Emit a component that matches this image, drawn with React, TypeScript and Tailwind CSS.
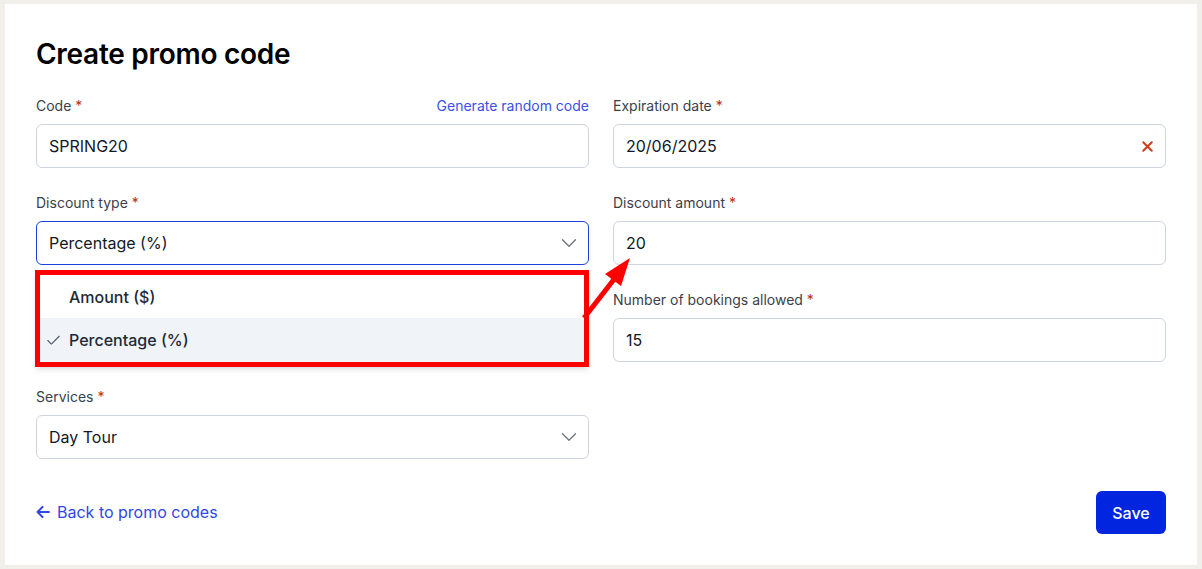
import React from "react";
import { Check, ChevronDown, X } from "lucide-react";

const Label = ({ text, required = true }: { text: string; required?: boolean }) => (
  <span className="text-sm leading-5 text-[#3b3f4a]">
    {text}
    {required && <span className="text-[#b8330f]"> *</span>}
  </span>
);

const inputCls =
  "mt-2 flex h-[44px] items-center rounded-md border border-[#cdd5e0] bg-white pl-3 pr-3.5 text-base text-[#111827]";

const Field = ({ label, value }: { label: string; value: string }) => (
  <div className="flex flex-col">
    <Label text={label} />
    <div className={inputCls}>{value}</div>
  </div>
);

export default function App() {
  return (
    <div
      className="min-h-screen bg-[#f0efea] pl-[5px] pr-[5px] pt-1"
      style={{ fontFamily: "Inter, 'Noto Sans', sans-serif" }}
    >
      <div className="relative bg-white px-[31px] pt-[32px] pb-[31px]">
        <h1 className="text-[28px] font-semibold leading-9 tracking-[-0.01em] text-black">Create promo code</h1>

        <div className="mt-[24px] grid grid-cols-2 gap-x-6 gap-y-[25px]">
          {/* Code */}
          <div className="flex flex-col">
            <div className="flex items-center justify-between">
              <Label text="Code" />
              <span className="text-sm leading-5 text-[#3d50e6]">Generate random code</span>
            </div>
            <div className={inputCls}>SPRING20</div>
          </div>

          {/* Expiration date */}
          <div className="flex flex-col">
            <Label text="Expiration date" />
            <div className={`${inputCls} justify-between !pr-[9px]`}>
              <span>20/06/2025</span>
              <X size={17} strokeWidth={2.8} className="text-[#d23a17]" />
            </div>
          </div>

          {/* Discount type + open dropdown */}
          <div className="relative flex flex-col">
            <Label text="Discount type" />
            <div className="mt-2 flex h-[44px] items-center justify-between rounded-md border border-[#1f3fe0] bg-white pl-3 pr-1.5 text-base text-[#111827]">
              <span>Percentage (%)</span>
              <ChevronDown size={26} strokeWidth={1.2} className="text-[#6b7280]" />
            </div>
            <div className="absolute left-[-1px] right-0 top-[77px] z-10 border-[5px] border-[#ff0000] bg-white shadow-md">
              <div className="flex h-[43px] items-center pl-[29px] text-base font-medium text-[#1f2937]">
                Amount ($)
              </div>
              <div className="flex h-[44px] items-center bg-[#f0f3f7] pl-[5px] text-base font-medium text-[#1f2937]">
                <Check size={17} strokeWidth={1.5} className="mr-[7px] text-[#4b5563]" />
                Percentage (%)
              </div>
            </div>
          </div>

          <Field label="Discount amount" value="20" />

          {/* hidden under the dropdown */}
          <div className="h-[72px]" />

          <Field label="Number of bookings allowed" value="15" />

          {/* Services */}
          <div className="flex flex-col">
            <Label text="Services" />
            <div className="mt-2 flex h-[44px] items-center justify-between rounded-md border border-[#cdd5e0] bg-white pl-3 pr-1.5 text-base text-[#111827]">
              <span>Day Tour</span>
              <ChevronDown size={26} strokeWidth={1.2} className="text-[#6b7280]" />
            </div>
          </div>
          <div />
        </div>

        <div className="mt-8 flex items-center justify-between">
          <span className="-mt-0.5 flex items-center gap-[7px] text-base leading-6 text-[#3047e6]">
            <svg width="14" height="12" viewBox="0 0 14 12" fill="none" stroke="currentColor" strokeWidth="2" strokeLinecap="round" strokeLinejoin="round">
              <path d="M6.5 1 L1.5 6 L6.5 11 M1.5 6 H13" />
            </svg>
            Back to promo codes
          </span>
          <button className="h-[43px] w-[70px] rounded-md bg-[#0226e0] text-base font-medium text-white">
            Save
          </button>
        </div>

        {/* annotation arrow */}
        <svg className="pointer-events-none absolute left-0 top-0 z-20" width="700" height="400">
          <line x1="579" y1="314" x2="610" y2="274" stroke="#ff0000" strokeWidth="5" />
          <polygon points="625,254 600,270 616,282" fill="#ff0000" />
        </svg>
      </div>
    </div>
  );
}
